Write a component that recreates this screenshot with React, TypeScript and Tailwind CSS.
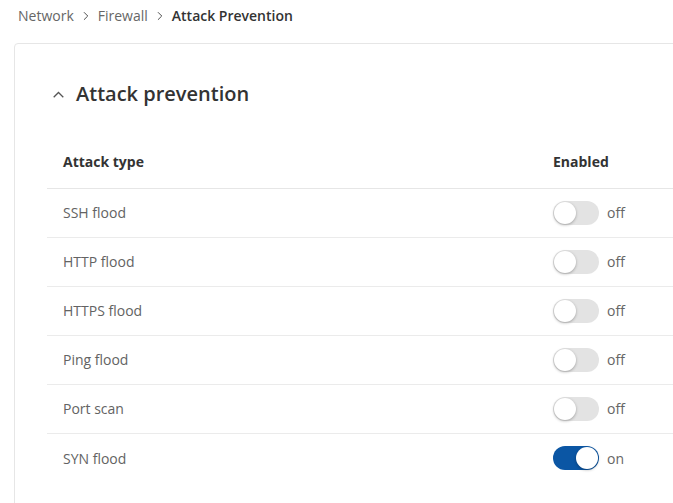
import { ChevronRight } from "lucide-react";

const rows: [string, boolean][] = [
  ["SSH flood", false],
  ["HTTP flood", false],
  ["HTTPS flood", false],
  ["Ping flood", false],
  ["Port scan", false],
  ["SYN flood", true],
];

function Toggle({ on }: { on: boolean }) {
  return (
    <div className="flex items-center gap-2">
      <div
        className={
          on
            ? "flex h-6 w-[46px] items-center justify-end rounded-full bg-[#0b56a4] px-[1px]"
            : "flex h-6 w-[46px] items-center justify-start rounded-full bg-[#e3e3e3] px-[1px]"
        }
      >
        <div className="h-[22px] w-[22px] rounded-full bg-white shadow-[0_1px_3px_rgba(0,0,0,0.3)]" />
      </div>
      <span className="text-[14px] text-[#666]">{on ? "on" : "off"}</span>
    </div>
  );
}

export default function App() {
  return (
    <div
      className="h-screen w-screen overflow-hidden bg-white"
      style={{ fontFamily: '"Open Sans", sans-serif' }}
    >
      <nav className="flex items-center gap-[5px] pl-[18px] pt-[6px] text-[14px] leading-5 text-[#666]">
        <span>Network</span>
        <ChevronRight size={14} strokeWidth={1.6} className="text-[#444]" />
        <span>Firewall</span>
        <ChevronRight size={14} strokeWidth={1.6} className="text-[#444]" />
        <span className="font-semibold text-[#333]">Attack Prevention</span>
      </nav>

      <section className="ml-[14px] mt-[17px] w-[720px] rounded-[4px] border border-[#e6e6e6] bg-white pl-8 pt-9 pb-10">
        <h2 className="flex items-center gap-[12px] pl-[6px] text-[20px] font-semibold leading-7 text-[#333]">
          <svg width="11" height="7" viewBox="0 0 11 7" fill="none" className="text-[#555]">
            <polyline points="0.7,6.3 5.5,1.5 10.3,6.3" stroke="currentColor" strokeWidth="1.3" />
          </svg>
          Attack prevention
        </h2>

        <div className="mt-[44px]">
          <div className="grid grid-cols-[490px_1fr] border-b border-[#e6e6e6] pb-[16px] text-[14px] font-bold leading-5 text-[#333]">
            <div className="px-4">Attack type</div>
            <div className="px-4">Enabled</div>
          </div>
          {rows.map(([name, on], i) => (
            <div
              key={name}
              className={
                i < rows.length - 1
                  ? "grid h-[49px] grid-cols-[490px_1fr] items-center border-b border-[#ebebeb] pb-[1px] text-[14px] text-[#636363]"
                  : "grid h-[49px] grid-cols-[490px_1fr] items-center pb-[1px] text-[14px] text-[#636363]"
              }
            >
              <div className="px-4">{name}</div>
              <div className="px-4">
                <Toggle on={on} />
              </div>
            </div>
          ))}
        </div>
      </section>
    </div>
  );
}
